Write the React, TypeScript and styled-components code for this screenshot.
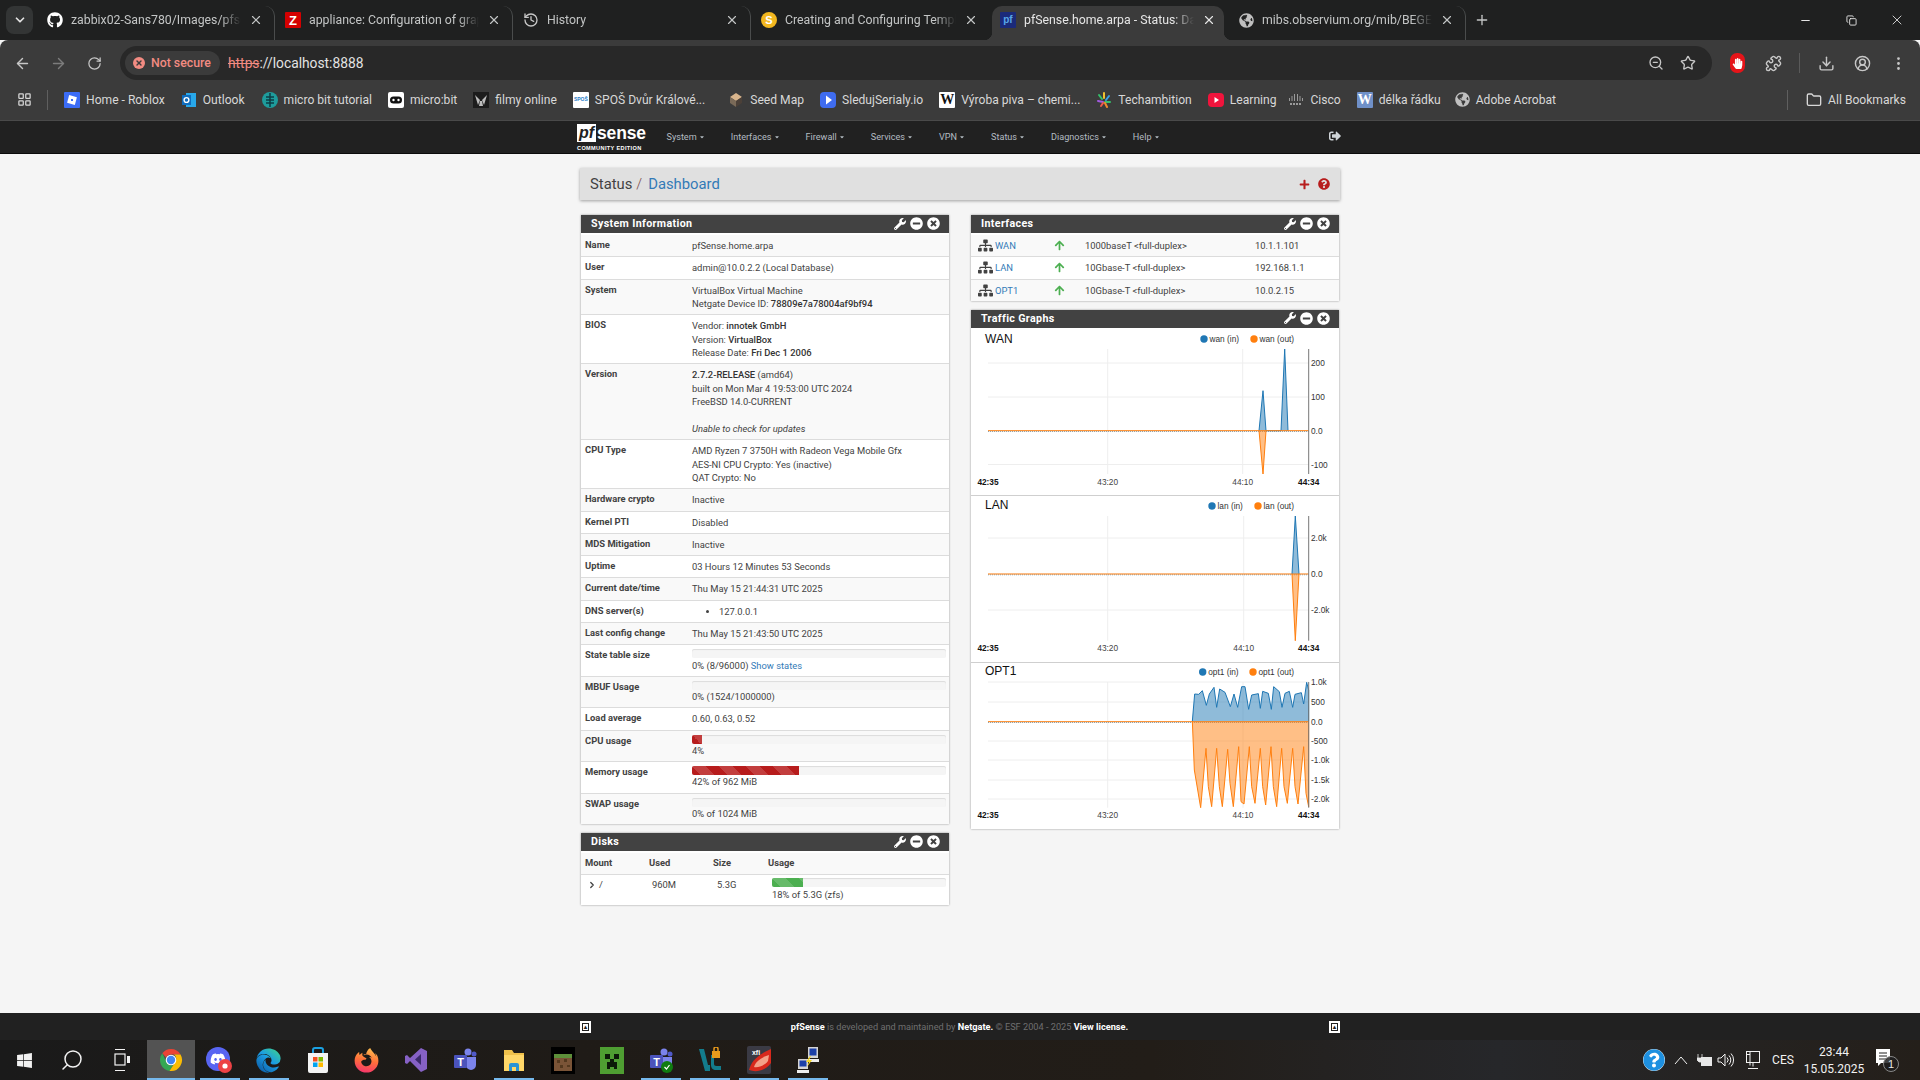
import React from "react";
import styled, { createGlobalStyle } from "styled-components";
import { ArrowLeft, ArrowRight, ChevronDown, ChevronRight, Download, EllipsisVertical, Folder, History, LayoutGrid, Minus, Plus, Puzzle, RotateCw, Search, Star, X, ZoomOut, CircleUserRound, Copy } from "lucide-react";
import { FaArrowUp, FaDiscord, FaEdge, FaFirefoxBrowser, FaGithub, FaGlobeAmericas, FaHandPaper, FaMinusCircle, FaPlus, FaQuestionCircle, FaSignOutAlt, FaSitemap, FaTimesCircle, FaWindows, FaWrench, FaCaretDown } from "react-icons/fa";

const GlobalStyle = createGlobalStyle`
  html, body { margin: 0; padding: 0; height: 100%; background: #f5f5f5; }
  * { box-sizing: border-box; }
  body { font-family: Roboto, "Liberation Sans", sans-serif; overflow: hidden; }
`;

const Screen = styled.div`
  width: 1920px;
  height: 1080px;
  display: flex;
  flex-direction: column;
  overflow: hidden;
`;

/* browser chrome */
const TabStrip = styled.div`
  height: 40px;
  flex: none;
  display: flex;
  align-items: flex-end;
  padding-left: 6px;
  background: #1f2020;
`;
const TabMenu = styled.div`
  width: 27px;
  height: 28px;
  margin: 0 4px 6px 0;
  border-radius: 8px;
  background: #333535;
  color: #e3e3e3;
  display: flex;
  align-items: center;
  justify-content: center;
`;
const Tab = styled.div<{ $active?: boolean; $sep?: boolean }>`
  position: relative;
  width: ${(p) => (p.$active ? "232px" : "238px")};
  height: 34px;
  margin: ${(p) => (p.$active ? "0 4px 0 3px" : "0")};
  padding: ${(p) => (p.$active ? "0 8px 6px 8px" : "0 11px 6px 10px")};
  display: flex;
  align-items: center;
  gap: 8px;
  font-size: 12.3px;
  color: ${(p) => (p.$active ? "#e6e6e6" : "#c3c5c5")};
  background: ${(p) => (p.$active ? "#3b3b3b" : "transparent")};
  border-radius: 10px 10px 0 0;
  border-right: ${(p) => (p.$sep ? "1px solid #4a4c4c" : "none")};
  background-clip: padding-box;
  ${(p) =>
    p.$active &&
    `
    &::before, &::after {
      content: "";
      position: absolute;
      bottom: 0;
      width: 8px;
      height: 8px;
    }
    &::before { left: -8px; background: radial-gradient(circle at 0 0, transparent 8px, #3b3b3b 8.5px); }
    &::after { right: -8px; background: radial-gradient(circle at 100% 0, transparent 8px, #3b3b3b 8.5px); }
  `}
`;
const TabTitle = styled.span`
  flex: 1;
  overflow: hidden;
  white-space: nowrap;
  -webkit-mask-image: linear-gradient(90deg, #000 88%, transparent);
  mask-image: linear-gradient(90deg, #000 88%, transparent);
`;
const TabFavicon = styled.span`
  width: 16px;
  height: 16px;
  flex: none;
  display: flex;
  align-items: center;
  justify-content: center;
`;
const SquareGlyph = styled.span<{ $bg: string; $fg?: string; $serif?: boolean; $size?: number; $round?: boolean }>`
  width: 16px;
  height: 16px;
  display: flex;
  align-items: center;
  justify-content: center;
  background: ${(p) => p.$bg};
  color: ${(p) => p.$fg || "#fff"};
  font-family: ${(p) => (p.$serif ? '"Liberation Serif", serif' : '"Liberation Sans", sans-serif')};
  font-size: ${(p) => p.$size || 13}px;
  font-weight: 700;
  border-radius: ${(p) => (p.$round ? "50%" : "1px")};
  line-height: 1;
  overflow: hidden;
`;
const NewTab = styled.div`
  width: 32px;
  height: 34px;
  padding-bottom: 6px;
  color: #c3c5c5;
  display: flex;
  align-items: center;
  justify-content: center;
`;
const WindowControls = styled.div`
  margin-left: auto;
  display: flex;
  align-self: flex-start;
  color: #e6e6e6;
`;
const WindowButton = styled.div`
  width: 46px;
  height: 40px;
  display: flex;
  align-items: center;
  justify-content: center;
`;

const Toolbar = styled.div`
  height: 40px;
  flex: none;
  display: flex;
  align-items: flex-end;
  padding-left: 4px;
  background: #3b3b3b;
  color: #c7c7c7;
  border-radius: 8px 8px 0 0;
`;
const ToolButton = styled.div<{ $dim?: boolean }>`
  width: 36px;
  height: 34px;
  flex: none;
  display: flex;
  align-items: center;
  justify-content: center;
  color: ${(p) => (p.$dim ? "#7c7c7c" : "#c7c7c7")};
`;
const Omnibox = styled.div`
  width: 1592px;
  height: 34px;
  margin: 0 7px 0 8px;
  padding: 0 8px 0 5px;
  border-radius: 17px;
  background: #282828;
  display: flex;
  align-items: center;
`;
const SecurityChip = styled.div`
  width: 95px;
  height: 24px;
  padding-left: 8px;
  border-radius: 12px;
  background: #3b3b3b;
  display: flex;
  align-items: center;
  gap: 6px;
  color: #f28b82;
  font-size: 12.3px;
  font-weight: 500;
`;
const ErrorDot = styled.span`
  width: 12px;
  height: 12px;
  border-radius: 50%;
  background: #f28b82;
  color: #3b3b3b;
  display: flex;
  align-items: center;
  justify-content: center;
`;
const Url = styled.div`
  margin-left: 8px;
  font-size: 13.8px;
  color: #e3e3e3;
  s { color: #f28b82; }
`;
const OmniRight = styled.div`
  margin-left: auto;
  display: flex;
  color: #c7c7c7;
`;
const OmniButton = styled.div`
  width: 32px;
  display: flex;
  justify-content: center;
`;
const ToolSep = styled.div`
  width: 1px;
  height: 20px;
  margin: 0 8px 7px;
  background: #5a5a5a;
`;
const BlockerBadge = styled.span`
  width: 15px;
  height: 20px;
  border-radius: 7px;
  background: #e51419;
  display: flex;
  align-items: center;
  justify-content: center;
`;

const BookmarkBar = styled.div`
  height: 41px;
  flex: none;
  display: flex;
  align-items: center;
  padding: 0 14px 1px 17px;
  background: #3b3b3b;
  border-bottom: 1px solid #4a4a4a;
  color: #d8d8d8;
  font-size: 12.1px;
`;
const BarSep = styled.div<{ $auto?: boolean }>`
  width: 1px;
  height: 20px;
  background: #5f5f5f;
  margin: ${(p) => (p.$auto ? "0 18px 0 auto" : "0 16px 0 15px")};
`;
const Bookmark = styled.div<{ $last?: boolean; $extra?: number }>`
  display: flex;
  align-items: center;
  gap: 6px;
  margin-right: ${(p) => (p.$last ? 0 : 16 + (p.$extra || 0))}px;
  white-space: nowrap;
`;

/* pfSense nav */
const NavBar = styled.nav`
  height: 33px;
  flex: none;
  background: #212121;
  border-bottom: 1px solid #0b0b0b;
  display: flex;
  justify-content: center;
`;
const NavInner = styled.div`
  width: 766px;
  display: flex;
  align-items: center;
  color: #b4bcc2;
  font-size: 9.1px;
`;
const Logo = styled.div`
  width: 72px;
  margin-right: 17.5px;
  color: #fff;
  display: flex;
  flex-direction: column;
`;
const LogoTop = styled.div`
  display: flex;
  align-items: center;
  height: 19px;
  font-family: "Liberation Sans", sans-serif;
  font-weight: 700;
  font-size: 17.5px;
  letter-spacing: -0.15px;
`;
const LogoPf = styled.span`
  width: 19px;
  height: 18px;
  margin-right: 1px;
  background: #fff;
  color: #212121;
  font-style: italic;
  display: flex;
  align-items: center;
  justify-content: center;
  font-size: 16px;
`;
const LogoSub = styled.div`
  font-family: "Liberation Sans", sans-serif;
  font-size: 5.6px;
  font-weight: 700;
  letter-spacing: 0.35px;
  margin-top: 2px;
  white-space: nowrap;
`;
const NavItem = styled.div`
  display: flex;
  align-items: center;
  gap: 2px;
  margin-right: 26px;
`;
const NavRight = styled.div`
  margin-left: auto;
  margin-right: 2px;
  margin-top: -2px;
  color: #cfd4d8;
  display: flex;
`;

/* page */
const Main = styled.main`
  flex: 1;
  min-height: 0;
  padding-top: 14px;
  display: flex;
  flex-direction: column;
  align-items: center;
  background: #f5f5f5;
`;
const Crumbs = styled.div`
  width: 760px;
  height: 32px;
  margin-bottom: 15px;
  padding: 0 10px;
  background: #e0e0e0;
  box-shadow: 0 1px 3px rgba(0, 0, 0, 0.35);
  display: flex;
  align-items: center;
  font-size: 14.8px;
  color: #424242;
`;
const CrumbSlash = styled.span`
  margin: 0 6px 0 4px;
  color: #7c4a4a;
  font-weight: 300;
`;
const CrumbLink = styled.span`
  color: #337ab7;
`;
const CrumbIcons = styled.div`
  margin-left: auto;
  display: flex;
  align-items: center;
  gap: 8px;
  color: #b71c1c;
`;
const Columns = styled.div`
  width: 760px;
  display: grid;
  grid-template-columns: 368px 368px;
  justify-content: space-between;
  align-items: start;
  padding: 0 1px;
`;
const Column = styled.div`
  display: flex;
  flex-direction: column;
  gap: 9px;
`;
const Panel = styled.section`
  background: #fff;
  box-shadow: 0 0 2px rgba(0, 0, 0, 0.4);
`;
const PanelHead = styled.header<{ $flush?: boolean }>`
  height: 18px;
  padding: 0 9px 1px 10px;
  margin-bottom: ${(p) => (p.$flush ? 0 : 2)}px;
  background: #424242;
  color: #fff;
  display: flex;
  align-items: center;
  font-size: 10.7px;
  font-weight: 700;
  letter-spacing: 0.35px;
`;
const HeadIcons = styled.div`
  margin-left: auto;
  display: flex;
  align-items: center;
  gap: 4px;
`;
const Row = styled.div<{ $cols?: string }>`
  display: grid;
  grid-template-columns: ${(p) => p.$cols || "107px 1fr"};
  padding: 3.95px 3px 3.95px 4px;
  border-top: 1px solid #dcdcdc;
  font-size: 9.4px;
  line-height: 13.4px;
  color: #424242;
  background: #fff;
  &:nth-child(even) { background: #f9f9f9; }
  &:first-of-type { border-top: none; }
`;
const Label = styled.div`
  font-weight: 700;
  margin-top: -1px;
`;
const Value = styled.div`
  b { font-weight: 500; color: #333; }
  a { color: #337ab7; }
  i { font-style: italic; }
`;
const Bullets = styled.ul`
  margin: 0;
  padding-left: 27px;
  li::marker { font-size: 10px; }
`;
const Progress = styled.div`
  height: 9px;
  margin-bottom: 0.25px;
  border-radius: 2px;
  background: #f5f5f5;
  box-shadow: inset 0 1px 1px rgba(0, 0, 0, 0.1);
  overflow: hidden;
`;
const ProgressFill = styled.div<{ $color: string }>`
  height: 100%;
  background-color: ${(p) => p.$color};
  background-image: linear-gradient(45deg, rgba(255,255,255,.15) 25%, transparent 25%, transparent 50%, rgba(255,255,255,.15) 50%, rgba(255,255,255,.15) 75%, transparent 75%, transparent);
  background-size: 27px 27px;
`;
const Disclosure = styled.span`
  height: 13.4px;
  display: inline-flex;
  align-items: center;
  gap: 2px;
  padding-left: 2px;
`;
const IfName = styled.div`
  height: 13.4px;
  display: flex;
  align-items: center;
  gap: 2px;
  color: #337ab7;
  svg { color: #424242; }
`;
const IfArrow = styled.div`
  height: 13.4px;
  display: flex;
  align-items: center;
  color: #4caf50;
`;
const GraphBlock = styled.div`
  display: block;
  border-bottom: 1px solid #cfcfcf;
  &:last-child { border-bottom: none; }
  svg { display: block; }
`;

/* footer + taskbar */
const Footer = styled.footer`
  height: 27px;
  flex: none;
  background: #212121;
  display: flex;
  justify-content: center;
`;
const FooterInner = styled.div`
  width: 762px;
  padding-right: 1px;
  display: flex;
  align-items: center;
  justify-content: space-between;
  color: #6f6f6f;
  font-size: 9.2px;
  b { color: #fff; font-weight: 700; }
`;
const FooterToggle = styled.span`
  width: 11px;
  height: 12px;
  margin-left: 1px;
  background: #fff;
  border: 2px solid #fff;
  outline: 1px solid #212121;
  outline-offset: -3px;
  display: flex;
  align-items: center;
  justify-content: center;
  color: #212121;
  font-size: 6px;
  line-height: 1;
`;
const Taskbar = styled.div`
  height: 40px;
  flex: none;
  display: flex;
  align-items: stretch;
  background: linear-gradient(90deg, #1a1a1a 0%, #1f1b17 30%, #221d18 60%, #26272a 78%, #241f1a 100%);
  color: #f2f2f2;
`;
const TaskCell = styled.div<{ $w?: number; $active?: boolean; $open?: boolean }>`
  width: ${(p) => p.$w || 49}px;
  flex: none;
  display: flex;
  align-items: center;
  justify-content: center;
  background: ${(p) => (p.$active ? "#535353" : "transparent")};
  background-image: ${(p) => (p.$open ? "linear-gradient(#76b9ed, #76b9ed)" : "none")};
  background-repeat: no-repeat;
  background-position: center bottom;
  background-size: ${(p) => (p.$active ? "100%" : "40px")} 2px;
`;
const MirroredSearch = styled(Search)`
  transform: scaleX(-1);
`;
const TrayArea = styled.div`
  margin-left: auto;
  display: flex;
  align-items: stretch;
  padding-right: 19px;
  font-size: 12px;
`;
const TrayCell = styled.div<{ $w: number }>`
  width: ${(p) => p.$w}px;
  display: flex;
  align-items: center;
  justify-content: center;
  flex-direction: column;
  gap: 3px;
  white-space: nowrap;
`;
const HelpBadge = styled.span`
  width: 22px;
  height: 22px;
  border-radius: 50%;
  background: #fff;
  display: flex;
`;

const RobloxIcon = () => (
  <svg width="16" height="16" viewBox="0 0 16 16"><rect width="16" height="16" fill="#3b6cf6" rx="1" /><rect x="4" y="4" width="8" height="8" fill="#fff" transform="rotate(15 8 8)" /><rect x="7" y="7" width="2" height="2" fill="#3b6cf6" /></svg>
);
const OutlookIcon = () => (
  <svg width="16" height="16" viewBox="0 0 16 16"><rect x="5" y="1" width="10" height="14" fill="#28a8ea" /><rect x="1" y="3" width="9" height="10" fill="#0f6cbd" /><circle cx="5.5" cy="8" r="2.4" fill="none" stroke="#fff" strokeWidth="1.4" /></svg>
);
const MicroTutorialIcon = () => (
  <svg width="16" height="16" viewBox="0 0 16 16"><circle cx="8" cy="8" r="8" fill="#1e9c9c" /><path d="M8 1v14M4 5h8M4 8h8M4 11h8" stroke="#0d3d45" strokeWidth="1.5" /></svg>
);
const MicrobitIcon = () => (
  <svg width="16" height="16" viewBox="0 0 16 16"><rect width="16" height="16" rx="2" fill="#fff" /><rect x="2" y="4.5" width="12" height="7" rx="3.5" fill="#111" /><circle cx="5.5" cy="8" r="1.2" fill="#fff" /><circle cx="10.5" cy="8" r="1.2" fill="#fff" /></svg>
);
const FilmyIcon = () => (
  <svg width="16" height="16" viewBox="0 0 16 16"><rect width="16" height="16" fill="#1c1c1c" /><path d="M2 3l5 5-2 5zM14 3L9 8l2 5zM7 9h2l1 5H6z" fill="#bdbdbd" /></svg>
);
const SeedIcon = () => (
  <svg width="16" height="16" viewBox="0 0 16 16"><path d="M8 1l6 4-6 4-6-4z" fill="#d8b48c" /><path d="M2 5l6 4v6l-6-4z" fill="#7a6a58" /><path d="M14 5L8 9v6l6-4z" fill="#4b4038" /></svg>
);
const SledujIcon = () => (
  <svg width="16" height="16" viewBox="0 0 16 16"><rect width="16" height="16" rx="4" fill="#3f6cf0" /><path d="M6 3.5l6 4.5-6 4.5z" fill="#fff" /></svg>
);
const TechIcon = () => (
  <svg width="16" height="16" viewBox="0 0 16 16" strokeWidth="2" strokeLinecap="round"><path d="M8 1v5" stroke="#f2c12e" /><path d="M3 3l3 4" stroke="#35c16b" /><path d="M13 4l-3 4" stroke="#3aa0e8" /><path d="M2 9l5 1" stroke="#a25be0" /><path d="M14 10l-5 0" stroke="#35c16b" /><path d="M5 14l2-3" stroke="#ef5b4c" /><path d="M11 15l-2-4" stroke="#f08a2c" /></svg>
);
const LearningIcon = () => (
  <svg width="16" height="16" viewBox="0 0 16 16"><rect y="1" width="16" height="14" rx="4" fill="#f0143c" /><path d="M6.5 5l4.5 3-4.5 3z" fill="#fff" /></svg>
);
const CiscoIcon = () => (
  <svg width="16" height="16" viewBox="0 0 16 16" stroke="#9a9a9a" strokeWidth="1"><path d="M1.5 6v3M4 4v5M6.5 2v7M9.5 2v7M12 4v5M14.5 6v3" /><path d="M2 12h12" strokeWidth="2" strokeDasharray="2 1" /></svg>
);

const ChromeLogo = () => (
  <svg width="24" height="24" viewBox="0 0 24 24">
    <path d="M12 1a11 11 0 0 1 9.53 5.5H12a5.5 5.5 0 0 0-4.9 3L3.3 5.3A11 11 0 0 1 12 1z" fill="#ea4335" />
    <path d="M3.3 5.3l4.3 9.3a5.5 5.5 0 0 0 6.5 2.5l-3.6 5.8A11 11 0 0 1 3.3 5.3z" fill="#34a853" />
    <path d="M21.53 6.5A11 11 0 0 1 10.5 22.9l5.1-8a5.5 5.5 0 0 0-.6-8.4z" fill="#fbbc04" />
    <circle cx="12" cy="12" r="5.3" fill="#fff" />
    <circle cx="12" cy="12" r="4.2" fill="#4285f4" />
  </svg>
);
const DiscordLogo = () => (
  <svg width="28" height="28" viewBox="0 0 28 28">
    <circle cx="12" cy="13" r="12" fill="#5865f2" />
    <foreignObject x="4" y="5" width="16" height="16"><FaDiscord size={16} color="#fff" /></foreignObject>
    <circle cx="19" cy="20" r="7" fill="#ed4245" />
    <circle cx="19" cy="20" r="2.6" fill="#fff" />
  </svg>
);
const EdgeLogo = () => (
  <>
    <svg width="0" height="0">
      <defs>
        <linearGradient id="edgeFill" x1="0.9" y1="0" x2="0.1" y2="1">
          <stop offset="0" stopColor="#3dd18f" />
          <stop offset="0.45" stopColor="#1b9de2" />
          <stop offset="1" stopColor="#0c59a4" />
        </linearGradient>
      </defs>
    </svg>
    <FaEdge size={25} style={{ fill: "url(#edgeFill)" }} />
  </>
);
const FirefoxLogo = () => (
  <>
    <svg width="0" height="0">
      <defs>
        <linearGradient id="foxFill" x1="0.6" y1="0" x2="0.4" y2="1">
          <stop offset="0" stopColor="#ffbd4f" />
          <stop offset="0.5" stopColor="#ff7139" />
          <stop offset="1" stopColor="#f5366b" />
        </linearGradient>
      </defs>
    </svg>
    <FaFirefoxBrowser size={25} style={{ fill: "url(#foxFill)" }} />
  </>
);
const StoreLogo = () => (
  <svg width="24" height="26" viewBox="0 0 24 26">
    <path d="M7 7V3a2 2 0 0 1 2-2h6a2 2 0 0 1 2 2v4" fill="none" stroke="#1ba1e2" strokeWidth="2" />
    <path d="M2 6h20v18a2 2 0 0 1-2 2H4a2 2 0 0 1-2-2z" fill="#f3f3f3" />
    <rect x="7" y="10" width="4.5" height="4.5" fill="#f25022" /><rect x="12.5" y="10" width="4.5" height="4.5" fill="#7fba00" />
    <rect x="7" y="15.5" width="4.5" height="4.5" fill="#00a4ef" /><rect x="12.5" y="15.5" width="4.5" height="4.5" fill="#ffb900" />
  </svg>
);
const VsLogo = () => (
  <svg width="24" height="26" viewBox="0 0 24 26">
    <path d="M17 1l6 3v18l-6 3L6 14l-3 3-2-1V9l2-1 3 3z" fill="#8661c5" />
    <path d="M17 7l-6 5.500 6 5.500z" fill="#3b2a6b" />
  </svg>
);
const TeamsLogo = ({ badge }: { badge?: boolean }) => (
  <svg width="24" height="26" viewBox="0 0 24 26">
    <circle cx="15" cy="5" r="3.500" fill="#7b83eb" /><circle cx="21" cy="7" r="2.500" fill="#5059c9" />
    <path d="M11 10h12v8a5 5 0 0 1-10 0z" fill="#7b83eb" />
    <rect x="1" y="8" width="13" height="13" rx="1" fill="#4b53bc" />
    <text x="7.500" y="18.500" fill="#fff" fontSize="11" fontWeight="700" textAnchor="middle" fontFamily="Liberation Sans">T</text>
    {badge && <circle cx="18" cy="20" r="6" fill="#107c10" />}
    {badge && <path d="M15.500 20l2 2 3-4" fill="none" stroke="#fff" strokeWidth="1.200" />}
  </svg>
);
const FolderLogo = () => (
  <svg width="22" height="24" viewBox="0 0 22 24">
    <path d="M1 2h8l2 3h10v18H1z" fill="#f0c14b" /><rect x="1" y="7" width="20" height="16" fill="#ffd768" />
    <path d="M6 23v-6a2 2 0 0 1 2-2h6a2 2 0 0 1 2 2v6h-3v-4h-4v4z" fill="#2a93d5" />
  </svg>
);
const DungeonLogo = () => (
  <svg width="24" height="27" viewBox="0 0 24 27">
    <rect width="24" height="27" fill="#000" /><rect x="3" y="7" width="18" height="17" fill="#7a5437" />
    <rect x="3" y="7" width="18" height="4" fill="#5d8f3a" /><path d="M6 13h3v3H6zM13 12h3v3h-3zM9 18h3v3H9zM16 18h3v2h-3z" fill="#54391f" />
  </svg>
);
const CreeperLogo = () => (
  <svg width="24" height="27" viewBox="0 0 24 27">
    <rect width="24" height="27" fill="#4f9e32" /><path d="M5 7h5v5H5zM14 7h5v5h-5zM10 12h4v3h3v7h-3v-2h-4v2H7v-7h3z" fill="#0c1a08" />
  </svg>
);
const CodeLockLogo = () => (
  <svg width="26" height="26" viewBox="0 0 26 26">
    <path d="M2 2l5 0 4 16 2 0v6H8z" fill="#137c8c" /><path d="M14 8h3v9c0 2 2 2 4 2h3v4h-5c-3 0-5-2-5-5z" fill="#137c8c" />
    <rect x="15" y="4" width="8" height="7" fill="#e89a1c" /><path d="M17 4V2a2 2 0 0 1 4 0v2" fill="none" stroke="#e89a1c" strokeWidth="1.500" />
  </svg>
);
const XfiLogo = () => (
  <svg width="24" height="28" viewBox="0 0 24 28">
    <rect width="24" height="28" rx="2" fill="#3a3a44" /><path d="M24 3C12 8 4 15 2 24c8 3 17 0 22-7z" fill="#d8291c" /><path d="M22 9C15 11 8 16 7 21c5 1 11-2 14-6z" fill="#f4a188" />
    <text x="9" y="9" fill="#fff" fontSize="7" fontWeight="700" fontFamily="Liberation Sans" textAnchor="middle">xfi</text>
  </svg>
);
const NetworkLogo = () => (
  <svg width="24" height="28" viewBox="0 0 24 28">
    <rect x="12" y="1" width="10" height="11" fill="#d5d5d5" /><rect x="13.500" y="2.500" width="7" height="7" fill="#1b3fa8" />
    <rect x="2" y="13" width="10" height="10" fill="#d5d5d5" /><rect x="3.500" y="14.500" width="7" height="6" fill="#1b3fa8" />
    <rect x="1" y="24" width="12" height="3" fill="#eee" /><rect x="11" y="13" width="12" height="3" fill="#eee" />
    <path d="M14 10l-4 6h3l-2 5 5-7h-3l2-4z" fill="#f4d623" />
  </svg>
);
const TaskViewIcon = () => (
  <svg width="16" height="24" viewBox="0 0 16 24" fill="none" stroke="#f2f2f2" strokeWidth="1.200"><path d="M1 1.500h10M1 22.500h10" /><rect x="1" y="6" width="10" height="11" /><rect x="13" y="8" width="3" height="7" fill="#f2f2f2" stroke="none" /></svg>
);
const BatteryIcon = () => (
  <svg width="16" height="16" viewBox="0 0 16 16"><rect x="4" y="5" width="11" height="9" fill="#e8e8e8" /><path d="M1 2v4M5 2v4M0 6h6v2l-2 2H2L0 8z" stroke="#e8e8e8" fill="#e8e8e8" strokeWidth="0.800" /></svg>
);
const SpeakerIcon = () => (
  <svg width="18" height="18" viewBox="0 0 18 18" fill="none" stroke="#f2f2f2" strokeWidth="1"><path d="M2 7h3l4-4v12l-4-4H2z" /><path d="M11 6.500a3.500 3.500 0 0 1 0 5M13 4.500a6.500 6.500 0 0 1 0 9M15 2.500a9.500 9.500 0 0 1 0 13" /></svg>
);
const PcIcon = () => (
  <svg width="16" height="20" viewBox="0 0 16 20" fill="none" stroke="#f2f2f2" strokeWidth="1"><rect x="1.500" y="1.500" width="13" height="11" /><path d="M1 4.500h4M5 1.500v14M8 12.500v4M3 18.500h10" /></svg>
);
const NotifyIcon = () => (
  <svg width="26" height="26" viewBox="0 0 26 26"><path d="M2 2h14v14h-9l-3 3v-3H2z" fill="#fff" /><path d="M5 6h8M5 9h8M5 12h8" stroke="#222" /><circle cx="17" cy="17" r="7.500" fill="rgba(30,30,30,.85)" stroke="#888" /><text x="17" y="21" fontSize="11" fill="#e8e8e8" textAnchor="middle" fontFamily="Liberation Sans">1</text></svg>
);
const TrayCaret = () => (
  <svg width="14" height="10" viewBox="0 0 14 10" fill="none" stroke="#f2f2f2"><path d="M1 9l6-7 6 7" /></svg>
);

const tabs = [
  { title: "zabbix02-Sans780/Images/pfsense", icon: <FaGithub size={16} color="#fff" />, sep: true },
  { title: "appliance: Configuration of graphs", icon: <SquareGlyph $bg="#d40000">Z</SquareGlyph>, sep: true },
  { title: "History", icon: <History size={16} color="#c7c7c7" />, sep: true },
  { title: "Creating and Configuring Templates", icon: <SquareGlyph $bg="#f2b71f" $round $size={11}>S</SquareGlyph>, sep: false },
  { title: "pfSense.home.arpa - Status: Dashboard", icon: <SquareGlyph $bg="#1b2a7a" $fg="#58a6e8" $size={10}>pf</SquareGlyph>, active: true },
  { title: "mibs.observium.org/mib/BEGEMOT", icon: <FaGlobeAmericas size={15} color="#c0c0c0" />, sep: true },
];

// extra = the few px of slack the real bookmark bar has after a label
const bookmarks: [React.ReactNode, string, number?][] = [
  [<RobloxIcon />, "Home - Roblox"],
  [<OutlookIcon />, "Outlook", 1],
  [<MicroTutorialIcon />, "micro bit tutorial"],
  [<MicrobitIcon />, "micro:bit"],
  [<FilmyIcon />, "filmy online"],
  [<SquareGlyph $bg="#fff" $fg="#2a7ec8" $size={5}>SPOŠ</SquareGlyph>, "SPOŠ Dvůr Králové...", 7],
  [<SeedIcon />, "Seed Map"],
  [<SledujIcon />, "SledujSerialy.io"],
  [<SquareGlyph $bg="#fff" $fg="#111" $serif $size={14}>W</SquareGlyph>, "Výroba piva – chemi..."],
  [<TechIcon />, "Techambition"],
  [<LearningIcon />, "Learning", -4],
  [<CiscoIcon />, "Cisco"],
  [<SquareGlyph $bg="#6f90c8" $fg="#fff" $serif $size={14}>W</SquareGlyph>, "délka řádku", -2],
  [<FaGlobeAmericas size={15} color="#c0c0c0" />, "Adobe Acrobat"],
];

const navItems = ["System", "Interfaces", "Firewall", "Services", "VPN", "Status", "Diagnostics", "Help"];

const Tools = () => (
  <HeadIcons>
    <FaWrench size={12} />
    <FaMinusCircle size={13} />
    <FaTimesCircle size={13} />
  </HeadIcons>
);

const Meter = ({ pct, color = "#b71c1c" }: { pct: number; color?: string }) => (
  <Progress>{pct > 0 && <ProgressFill $color={color} style={{ width: `${pct}%` }} />}</Progress>
);

const systemRows: [string, React.ReactNode][] = [
  ["Name", "pfSense.home.arpa"],
  ["User", "admin@10.0.2.2 (Local Database)"],
  ["System", <>VirtualBox Virtual Machine<br />Netgate Device ID: <b>78809e7a78004af9bf94</b></>],
  ["BIOS", <>Vendor: <b>innotek GmbH</b><br />Version: <b>VirtualBox</b><br />Release Date: <b>Fri Dec 1 2006</b></>],
  ["Version", <><b>2.7.2-RELEASE</b> (amd64)<br />built on Mon Mar 4 19:53:00 UTC 2024<br />FreeBSD 14.0-CURRENT<br /><br /><i>Unable to check for updates</i></>],
  ["CPU Type", <>AMD Ryzen 7 3750H with Radeon Vega Mobile Gfx<br />AES-NI CPU Crypto: Yes (inactive)<br />QAT Crypto: No</>],
  ["Hardware crypto", "Inactive"],
  ["Kernel PTI", "Disabled"],
  ["MDS Mitigation", "Inactive"],
  ["Uptime", "03 Hours 12 Minutes 53 Seconds"],
  ["Current date/time", "Thu May 15 21:44:31 UTC 2025"],
  ["DNS server(s)", <Bullets><li>127.0.0.1</li></Bullets>],
  ["Last config change", "Thu May 15 21:43:50 UTC 2025"],
  ["State table size", <><Meter pct={0} />0% (8/96000) <a>Show states</a></>],
  ["MBUF Usage", <><Meter pct={0} />0% (1524/1000000)</>],
  ["Load average", "0.60, 0.63, 0.52"],
  ["CPU usage", <><Meter pct={4} />4%</>],
  ["Memory usage", <><Meter pct={42} />42% of 962 MiB</>],
  ["SWAP usage", <><Meter pct={0} />0% of 1024 MiB</>],
];

const interfaces = [
  ["WAN", "1000baseT <full-duplex>", "10.1.1.101"],
  ["LAN", "10Gbase-T <full-duplex>", "192.168.1.1"],
  ["OPT1", "10Gbase-T <full-duplex>", "10.0.2.15"],
];

/* chart: all coordinates are page pixels, the viewBox moves them into the panel */
type GraphDef = {
  title: string;
  top: number;
  height: number;
  titleY: number;
  legendY: number;
  legend: [number, string, number, string];
  plot: [number, number];
  zero: number;
  grid: [number, string][];
  xGrid: [number, number];
  inPts: [number, number][];
  outPts: [number, number][];
};

const z = (pts: number[]): [number, number][] => {
  const out: [number, number][] = [];
  for (let i = 0; i < pts.length; i += 2) out.push([960 + pts[i] / 3, 490 + pts[i + 1] / 3]);
  return out;
};

const graphs: GraphDef[] = [
  {
    title: "WAN", top: 328, height: 167, titleY: 338, legendY: 339,
    legend: [1204, "wan (in)", 1254, "wan (out)"],
    plot: [349, 474], zero: 430.7,
    grid: [[363, "200"], [397, "100"], [430.7, "0.0"], [464.5, "-100"]],
    xGrid: [1107.7, 1242.7],
    inPts: [[1259, 430.7], [1263, 390.7], [1266, 430.7], [1281, 430.7], [1284.7, 349], [1288, 430.7]],
    outPts: [[1259, 430.7], [1263, 474], [1266, 430.7]],
  },
  {
    title: "LAN", top: 496, height: 166, titleY: 504, legendY: 506,
    legend: [1212, "lan (in)", 1258, "lan (out)"],
    plot: [516, 640.7], zero: 574,
    grid: [[538, "2.0k"], [574, "0.0"], [610, "-2.0k"]],
    xGrid: [1107.7, 1243.7],
    inPts: [[1292, 574], [1295.3, 516], [1299, 574]],
    outPts: [[1292, 574], [1295.3, 640.7], [1299, 574]],
  },
  {
    title: "OPT1", top: 663, height: 166, titleY: 670, legendY: 672,
    legend: [1202.7, "opt1 (in)", 1253, "opt1 (out)"],
    plot: [682, 807.7], zero: 721.7,
    grid: [[682, "1.0k"], [702, "500"], [721.7, "0.0"], [741, "-500"], [760, "-1.0k"], [780, "-1.5k"], [799, "-2.0k"]],
    xGrid: [1107.7, 1243],
    inPts: z([697,694, 704,612, 716,613, 727,602, 739,646, 748,612, 762,592, 770,652, 779,597, 795,607, 811,650, 822,612, 833,652, 845,590, 855,590, 866,658, 875,615, 895,611, 901,655, 908,604, 925,610, 934,658, 941,590, 958,605, 966,652, 975,610, 988,604, 998,652, 1005,613, 1024,608, 1031,642, 1040,577, 1046,600, 1046,694]),
    outPts: z([697,694, 703,840, 722,953, 738,775, 745,890, 755,950, 770,775, 778,890, 787,950, 803,778, 810,880, 820,950, 836,770, 843,935, 852,942, 868,770, 875,890, 885,940, 901,775, 908,890, 917,945, 933,770, 940,890, 950,950, 965,775, 972,890, 982,940, 998,775, 1005,890, 1014,942, 1031,770, 1038,910, 1046,950, 1046,694]),
  },
];

const BLUE = "#1f77b4";
const ORANGE = "#ff7f0e";
const LEFT = 988;
const AXIS = 1308.7;

const Graph = ({ g }: { g: GraphDef }) => {
  const line = (pts: [number, number][]) => pts.map((p) => p.join(",")).join(" ");
  const area = (pts: [number, number][]) => line([[pts[0][0], g.zero], ...pts, [pts[pts.length - 1][0], g.zero]]);
  const timeY = g.plot[1] + 7.5;
  return (
    <GraphBlock>
      <svg width="368" height={g.height} viewBox={`971 ${g.top} 368 ${g.height}`} fontFamily="Liberation Sans, Arial, sans-serif" fontSize="8.3" fill="#333">
        <text x="985" y={g.titleY + 4.5} fontSize="12" fill="#111">{g.title}</text>
        <circle cx={g.legend[0]} cy={g.legendY} r="3.7" fill={BLUE} />
        <text x={g.legend[0] + 5.5} y={g.legendY + 3}>{g.legend[1]}</text>
        <circle cx={g.legend[2]} cy={g.legendY} r="3.7" fill={ORANGE} />
        <text x={g.legend[2] + 5.5} y={g.legendY + 3}>{g.legend[3]}</text>
        {g.xGrid.map((x) => <line key={x} x1={x} x2={x} y1={g.plot[0]} y2={g.plot[1]} stroke="#eeeeee" />)}
        {g.grid.map(([y]) => <line key={y} x1={LEFT} x2={AXIS} y1={y} y2={y} stroke="#eeeeee" />)}
        <line x1={LEFT} x2={AXIS} y1={g.zero + 0.8} y2={g.zero + 0.8} stroke={BLUE} strokeWidth="1" strokeDasharray="1 1" opacity=".6" />
        <polygon points={area(g.inPts)} fill={BLUE} opacity=".5" />
        <polygon points={area(g.outPts)} fill={ORANGE} opacity=".5" />
        <polyline points={line(g.inPts)} fill="none" stroke={BLUE} strokeWidth="1" />
        <polyline points={line(g.outPts)} fill="none" stroke={ORANGE} strokeWidth="1" />
        <line x1={LEFT} x2={AXIS} y1={g.zero} y2={g.zero} stroke={ORANGE} strokeWidth="1" />
        <line x1={AXIS} x2={AXIS} y1={g.plot[0]} y2={g.plot[1]} stroke="#777" />
        {g.grid.map(([y, t]) => <text key={t} x="1311" y={y + 3}>{t}</text>)}
        <text x={LEFT} y={timeY + 3} textAnchor="middle" fontWeight="700" fill="#111">42:35</text>
        <text x={g.xGrid[0]} y={timeY + 3} textAnchor="middle" fill="#444">43:20</text>
        <text x={g.xGrid[1]} y={timeY + 3} textAnchor="middle" fill="#444">44:10</text>
        <text x={AXIS} y={timeY + 3} textAnchor="middle" fontWeight="700" fill="#111">44:34</text>
      </svg>
    </GraphBlock>
  );
};

export default function App() {
  return (
    <Screen>
      <GlobalStyle />
      <TabStrip>
        <TabMenu><ChevronDown size={14} strokeWidth={3} /></TabMenu>
        {tabs.map((t) => (
          <Tab key={t.title} $active={t.active} $sep={t.sep}>
            <TabFavicon>{t.icon}</TabFavicon>
            <TabTitle>{t.title}</TabTitle>
            <X size={14} />
          </Tab>
        ))}
        <NewTab><Plus size={16} /></NewTab>
        <WindowControls>
          <WindowButton><Minus size={13} /></WindowButton>
          <WindowButton><Copy size={11} /></WindowButton>
          <WindowButton><X size={16} strokeWidth={1.3} /></WindowButton>
        </WindowControls>
      </TabStrip>
      <Toolbar>
        <ToolButton><ArrowLeft size={17} /></ToolButton>
        <ToolButton $dim><ArrowRight size={17} /></ToolButton>
        <ToolButton><RotateCw size={15} /></ToolButton>
        <Omnibox>
          <SecurityChip>
            <ErrorDot><X size={8} strokeWidth={4} /></ErrorDot>
            Not secure
          </SecurityChip>
          <Url><s>https</s>://localhost:8888</Url>
          <OmniRight>
            <OmniButton><ZoomOut size={16} /></OmniButton>
            <OmniButton><Star size={16} /></OmniButton>
          </OmniRight>
        </Omnibox>
        <ToolButton><BlockerBadge><FaHandPaper size={11} color="#fff" /></BlockerBadge></ToolButton>
        <ToolButton><Puzzle size={17} /></ToolButton>
        <ToolSep />
        <ToolButton><Download size={17} /></ToolButton>
        <ToolButton><CircleUserRound size={17} /></ToolButton>
        <ToolButton><EllipsisVertical size={17} /></ToolButton>
      </Toolbar>
      <BookmarkBar>
        <LayoutGrid size={15} />
        <BarSep />
        {bookmarks.map(([icon, name, extra]) => (
          <Bookmark key={name} $extra={extra}>{icon}{name}</Bookmark>
        ))}
        <BarSep $auto />
        <Bookmark $last><Folder size={16} />All Bookmarks</Bookmark>
      </BookmarkBar>

      <NavBar>
        <NavInner>
          <Logo>
            <LogoTop><LogoPf>pf</LogoPf>sense</LogoTop>
            <LogoSub>COMMUNITY EDITION</LogoSub>
          </Logo>
          {navItems.map((n) => (
            <NavItem key={n}>{n}<FaCaretDown size={6} /></NavItem>
          ))}
          <NavRight><FaSignOutAlt size={12} /></NavRight>
        </NavInner>
      </NavBar>

      <Main>
        <Crumbs>
          Status<CrumbSlash>/</CrumbSlash><CrumbLink>Dashboard</CrumbLink>
          <CrumbIcons><FaPlus size={11} /><FaQuestionCircle size={12} /></CrumbIcons>
        </Crumbs>
        <Columns>
          <Column>
            <Panel>
              <PanelHead>System Information<Tools /></PanelHead>
              {systemRows.map(([k, v]) => (
                <Row key={k}><Label>{k}</Label><Value>{v}</Value></Row>
              ))}
            </Panel>
            <Panel>
              <PanelHead>Disks<Tools /></PanelHead>
              <Row $cols="64px 64px 55px 1fr"><Label>Mount</Label><Label>Used</Label><Label>Size</Label><Label>Usage</Label></Row>
              <Row $cols="67px 65px 55px 1fr">
                <Disclosure><ChevronRight size={10} strokeWidth={3} /> /</Disclosure>
                <Value>960M</Value>
                <Value>5.3G</Value>
                <Value><Meter pct={18} color="#4caf50" />18% of 5.3G (zfs)</Value>
              </Row>
            </Panel>
          </Column>
          <Column>
            <Panel>
              <PanelHead>Interfaces<Tools /></PanelHead>
              {interfaces.map(([name, media, ip]) => (
                <Row key={name} $cols="3px 75.5px 31.5px 170px 1fr">
                  <span />
                  <IfName><FaSitemap size={15} />{name}</IfName>
                  <IfArrow><FaArrowUp size={11} /></IfArrow>
                  <Value>{media}</Value>
                  <Value>{ip}</Value>
                </Row>
              ))}
            </Panel>
            <Panel>
              <PanelHead $flush>Traffic Graphs<Tools /></PanelHead>
              {graphs.map((g) => <Graph key={g.title} g={g} />)}
            </Panel>
          </Column>
        </Columns>
      </Main>

      <Footer>
        <FooterInner>
          <FooterToggle>▲</FooterToggle>
          <span><b>pfSense</b> is developed and maintained by <b>Netgate.</b> © ESF 2004 - 2025 <b>View license.</b></span>
          <FooterToggle>▲</FooterToggle>
        </FooterInner>
      </Footer>
      <Taskbar>
        <TaskCell $w={48}><FaWindows size={17} /></TaskCell>
        <TaskCell $w={48}><MirroredSearch size={24} strokeWidth={1.5} /></TaskCell>
        <TaskCell $w={51}><TaskViewIcon /></TaskCell>
        <TaskCell $active $open $w={48}><ChromeLogo /></TaskCell>
        <TaskCell $open><DiscordLogo /></TaskCell>
        <TaskCell $open><EdgeLogo /></TaskCell>
        <TaskCell><StoreLogo /></TaskCell>
        <TaskCell><FirefoxLogo /></TaskCell>
        <TaskCell><VsLogo /></TaskCell>
        <TaskCell><TeamsLogo /></TaskCell>
        <TaskCell $open><FolderLogo /></TaskCell>
        <TaskCell><DungeonLogo /></TaskCell>
        <TaskCell><CreeperLogo /></TaskCell>
        <TaskCell $open><TeamsLogo badge /></TaskCell>
        <TaskCell $open><CodeLockLogo /></TaskCell>
        <TaskCell $open><XfiLogo /></TaskCell>
        <TaskCell $open><NetworkLogo /></TaskCell>
        <TrayArea>
          <TrayCell $w={26}><HelpBadge><FaQuestionCircle size={22} color="#1e90e0" /></HelpBadge></TrayCell>
          <TrayCell $w={28}><TrayCaret /></TrayCell>
          <TrayCell $w={20}><BatteryIcon /></TrayCell>
          <TrayCell $w={20}><SpeakerIcon /></TrayCell>
          <TrayCell $w={36}><PcIcon /></TrayCell>
          <TrayCell $w={24}>CES</TrayCell>
          <TrayCell $w={78}><span>23:44</span><span>15.05.2025</span></TrayCell>
          <TrayCell $w={28}><NotifyIcon /></TrayCell>
        </TrayArea>
      </Taskbar>
    </Screen>
  );
}
